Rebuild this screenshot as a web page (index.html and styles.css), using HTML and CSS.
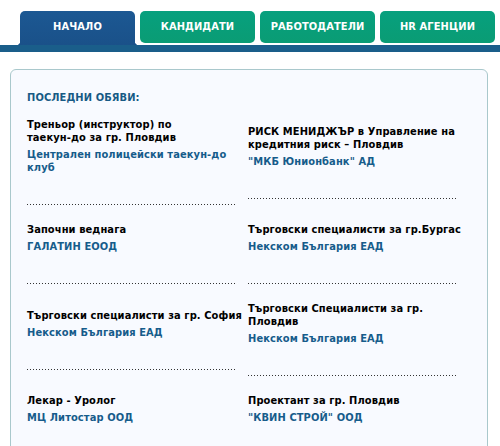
FILE: index.html
```html
<!DOCTYPE html>
<html lang="bg">
    <head>
        <meta charset="UTF-8">
        <title>Начало</title>
        <link rel="stylesheet" href="styles.css">
    </head>
    <body>
        <div id="menu">
            <div class="tabs">
                <a class="tab active" href="#">НАЧАЛО</a>
                <a class="tab" href="#">КАНДИДАТИ</a>
                <a class="tab" href="#">РАБОТОДАТЕЛИ</a>
                <a class="tab" href="#">HR АГЕНЦИИ</a>
            </div>
            <div class="bar"></div>
        </div>

        <div class="panel">
            <h3>ПОСЛЕДНИ ОБЯВИ:</h3>
            <table class="obqvi">
                <tr>
                    <td>
                        <div class="title">Треньор (инструктор) по<br>таекун-до за гр. Пловдив</div>
                        <a class="firma" href="#">Централен полицейски таекун-до клуб</a>
                        <div class="dots"></div>
                    </td>
                    <td>
                        <div class="title">РИСК МЕНИДЖЪР в Управление на кредитния риск – Пловдив</div>
                        <a class="firma" href="#">"МКБ Юнионбанк" АД</a>
                        <div class="dots"></div>
                    </td>
                </tr>
                <tr>
                    <td>
                        <div class="title">Започни веднага</div>
                        <a class="firma" href="#">ГАЛАТИН ЕООД</a>
                        <div class="dots"></div>
                    </td>
                    <td>
                        <div class="title">Търговски специалисти за гр.Бургас</div>
                        <a class="firma" href="#">Некском България ЕАД</a>
                        <div class="dots"></div>
                    </td>
                </tr>
                <tr>
                    <td>
                        <div class="title">Търговски специалисти за гр. София</div>
                        <a class="firma" href="#">Некском България ЕАД</a>
                        <div class="dots"></div>
                    </td>
                    <td>
                        <div class="title">Търговски Специалисти за гр. Пловдив</div>
                        <a class="firma" href="#">Некском България ЕАД</a>
                        <div class="dots"></div>
                    </td>
                </tr>
                <tr>
                    <td>
                        <div class="title">Лекар - Уролог</div>
                        <a class="firma" href="#">МЦ Литостар ООД</a>
                        <div class="dots"></div>
                    </td>
                    <td>
                        <div class="title">Проектант за гр. Пловдив</div>
                        <a class="firma" href="#">"КВИН СТРОЙ" ООД</a>
                        <div class="dots"></div>
                    </td>
                </tr>
            </table>
        </div>
    </body>
</html>
```
FILE: styles.css
```css
body {
    margin: 0;
    background-color: #fff;
    font-family: "DejaVu Sans Condensed", "DejaVu Sans", sans-serif;
    font-size: 11px;
    font-weight: bold;
    line-height: 13px;
    letter-spacing: 0.1px;
    color: #000;
}
.tabs {
    display: flex;
    gap: 5px;
    padding: 11px 0 0 20px;
    height: 34px;
}
.tab {
    width: 115px;
    height: 32px;
    line-height: 32px;
    text-align: center;
    color: #fff;
    text-decoration: none;
    font-size: 11px;
    background: linear-gradient(#07a07e, #0a9c74);
    border-radius: 5px;
}
.tab.active {
    position: relative;
    height: 34px;
    border-radius: 5px 5px 0 0;
    background: linear-gradient(#1c5893, #1a5189);
}
.tab.active::before,
.tab.active::after {
    content: "";
    position: absolute;
    bottom: 0;
    width: 4px;
    height: 4px;
}
.tab.active::before {
    left: -4px;
    background: radial-gradient(circle at 0 0, transparent 4px, #1a5189 4.5px);
}
.tab.active::after {
    right: -4px;
    background: radial-gradient(circle at 100% 0, transparent 4px, #1a5189 4.5px);
}
.bar {
    height: 7px;
    background-color: #1a5e8a;
}
.panel {
    margin: 17px 12px 0 10px;
    padding: 21px 0 20px 16px;
    min-height: 400px;
    border: 1px solid #a9c8cc;
    border-radius: 6px 6px 0 0;
    background-color: #f8faff;
}
.panel h3 {
    margin: 0 0 5px 0;
    font-size: 11px;
    color: #175a85;
}
.obqvi {
    border-collapse: collapse;
}
.obqvi td {
    width: 221px;
    padding: 9px 0;
    vertical-align: middle;
}
.obqvi td + td {
    width: 225px;
}
.title {
    color: #000;
}
.firma {
    display: block;
    margin-top: 4px;
    color: #165c8b;
    text-decoration: none;
}
.dots {
    width: 210px;
    height: 1px;
    margin-top: 30px;
    background-image: linear-gradient(to right, #333 1px, transparent 1px);
    background-size: 3px 1px;
}
```
